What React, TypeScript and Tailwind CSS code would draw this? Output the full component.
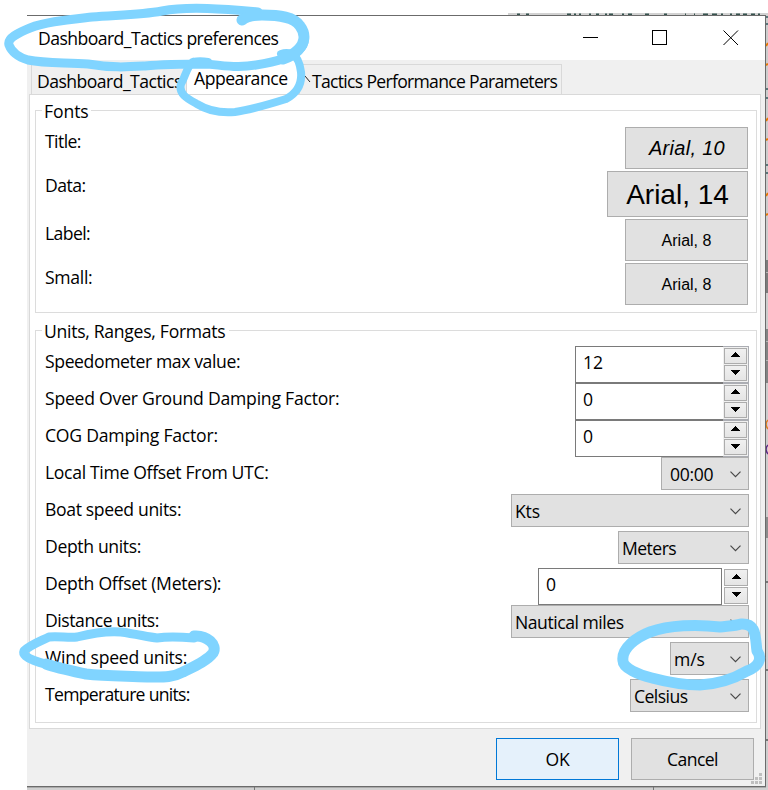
import React from "react";

const UI = "font-['Open_Sans','Noto_Sans',sans-serif] text-[17.6px] text-black whitespace-nowrap";

function Chevron() {
  return (
    <svg width="11" height="7" viewBox="0 0 11 7" className="mt-px shrink-0">
      <path d="M0.5 0.7L5.5 5.7L10.5 0.7" fill="none" stroke="#484848" strokeWidth="1.2" />
    </svg>
  );
}

function Combo({ text, box, textClass }: { text: string; box: string; textClass: string }) {
  return (
    <div className={`flex h-[33px] items-center justify-between border border-[#adadad] bg-[#e1e1e1] pr-[7px] ${box}`}>
      <span className={`leading-[24px] ${textClass}`}>{text}</span>
      <Chevron />
    </div>
  );
}

function Arrow({ down }: { down?: boolean }) {
  return (
    <svg width="9" height="5" viewBox="0 0 9 5" shapeRendering="crispEdges">
      <path d={down ? "M0 0H9V1H8V2H7V3H6V4H5V5H4V4H3V3H2V2H1V1H0Z" : "M0 5H9V4H8V3H7V2H6V1H5V0H4V1H3V2H2V3H1V4H0Z"} />
    </svg>
  );
}

function SpinButtons({ size }: { size: string }) {
  return (
    <>
      <div className={`flex items-center justify-center border border-[#acacac] bg-linear-to-b from-[#f0f0f0] to-[#e5e5e5] pb-[3px] ${size}`}>
        <Arrow />
      </div>
      <div className={`flex items-center justify-center border border-[#acacac] bg-linear-to-b from-[#f0f0f0] to-[#e5e5e5] pb-[2px] ${size}`}>
        <Arrow down />
      </div>
    </>
  );
}

function Spin({ text }: { text: string }) {
  return (
    <div className="flex h-[37px] w-[174px]">
      <div className="flex w-[148px] border border-r-0 border-[#7a7a7a] bg-white pl-[7px] pt-[3px]">
        <span className="leading-[24px]">{text}</span>
      </div>
      <div className="flex flex-1 flex-col gap-px border border-l-0 border-[#abadb3] bg-[#f0f0f0] py-px pl-px pr-px">
        <SpinButtons size="h-[17px] w-full" />
      </div>
    </div>
  );
}

function FontButton({ text, box }: { text: string; box: string }) {
  return (
    <button className={`flex items-center justify-center border border-[#adadad] bg-[#e1e1e1] font-['Liberation_Sans',Arial,sans-serif] ${box}`}>
      {text}
    </button>
  );
}

const fontRows = [
  { label: "Title:", track: "tracking-[-0.57px]", height: "h-[44px]", text: "Arial, 10", box: "w-[123px] h-[42px] text-[20px] tracking-[0.3px] italic pl-[1px]" },
  { label: "Data:", track: "tracking-[-0.5px]", height: "h-[48px]", text: "Arial, 14", box: "w-[141px] h-[46px] text-[28px] pt-[2px]" },
  { label: "Label:", track: "tracking-[-0.6px]", height: "h-[44px]", text: "Arial, 8", box: "w-[123px] h-[42px] text-[16px] pt-[2px]" },
  { label: "Small:", track: "tracking-[-0.3px]", height: "h-[44px]", text: "Arial, 8", box: "w-[123px] h-[42px] text-[16px] pt-[2px]" },
];

const unitRows = [
  { label: "Speedometer max value:", track: "tracking-[-0.39px]", control: <Spin text="12" /> },
  { label: "Speed Over Ground Damping Factor:", track: "tracking-[-0.23px]", control: <Spin text="0" /> },
  { label: "COG Damping Factor:", track: "tracking-[-0.22px]", control: <Spin text="0" /> },
  { label: "Local Time Offset From UTC:", track: "tracking-[-0.33px]", control: <Combo text="00:00" box="w-[88px] pl-[8px]" textClass="tracking-[-0.3px]" /> },
  { label: "Boat speed units:", track: "tracking-[-0.35px]", control: <Combo text="Kts" box="w-[238px] pl-[3px]" textClass="tracking-[-0.2px]" /> },
  { label: "Depth units:", track: "tracking-[-0.36px]", control: <Combo text="Meters" box="w-[131px] pl-[3px]" textClass="tracking-[-0.55px]" /> },
  {
    label: "Depth Offset (Meters):",
    track: "tracking-[-0.27px]",
    control: (
      <div className="flex h-[37px] w-[211px] gap-[2px]">
        <div className="w-[184px] border border-[#7a7a7a] pl-[7px] pt-[3px] leading-[24px]">0</div>
        <div className="flex flex-col gap-px pt-px">
          <SpinButtons size="h-[17px] w-[24px]" />
        </div>
      </div>
    ),
  },
  { label: "Distance units:", track: "tracking-[-0.45px]", control: <Combo text="Nautical miles" box="w-[238px] pl-[3px]" textClass="tracking-[-0.47px]" /> },
  { label: "Wind speed units:", track: "tracking-[-0.25px]", control: <Combo text="m/s" box="w-[79px] pl-[3px]" textClass="tracking-[-0.1px]" /> },
  { label: "Temperature units:", track: "tracking-[-0.71px]", control: <Combo text="Celsius" box="w-[119px] pl-[3px]" textClass="tracking-[-0.55px]" /> },
];

function Backdrop() {
  return (
    <svg className="absolute left-0 top-0" width="768" height="790" viewBox="0 0 768 790">
      <rect x="508" y="13" width="260" height="3" fill="#d2d2d2" />
      <path d="M517 14.5h3m6 0h3M567 14.5h4m3 0h2m3 0h2m8 0h2m5 0h3m6 0h2m2 0h4m9 0h2m4 0h4m13 0h4m15 0h3m18 0h1m8 0h1m8 0h5m4 0h5m4 0h2m7 0h2m4 0h4m3 0h4m4 0h4m3 0h2" stroke="#35534e" strokeWidth="2" />
      <rect x="766" y="16" width="2" height="774" fill="#cdcdcd" />
      <rect x="766" y="260" width="2" height="33" fill="#7c7c7c" />
      <rect x="766" y="272" width="2" height="1" fill="#b5b5b5" />
      <rect x="766" y="329" width="2" height="54" fill="#838383" />
      <path d="M766 341.5h2M766 360.5h2" stroke="#b5b5b5" />
      <rect x="766" y="517" width="2" height="21" fill="#8c8c8c" />
      <path d="M766 46l2-3M766 65l2-1M766 121l2-3M766 140l2-1M766 196l2-3M766 215l2-1" stroke="#e87800" strokeWidth="2" />
      <path d="M766 17h2M766 24h2M766 89h2M766 98h2M766 165h2M766 173h2" stroke="#355b60" strokeWidth="1.5" />
      <path d="M768 420q-4 4 0 9" stroke="#e07b20" fill="none" strokeWidth="1.5" />
      <path d="M768 445q-4 4 0 9" stroke="#5c2785" fill="none" strokeWidth="1.5" />
      <path d="M766 670h2M766 582h2M766 740h2" stroke="#777" strokeWidth="2" />
      <rect x="27" y="787" width="741" height="3" fill="#d0d0d0" />
      <path d="M27 787.5H766" stroke="#aaa" />
      <path d="M254.5 787v3M653.5 787v3" stroke="#777" />
    </svg>
  );
}

function Marker() {
  return (
    <svg className="pointer-events-none absolute left-0 top-0" width="768" height="790" viewBox="0 0 768 790" fill="none" stroke="#80d4ff" strokeLinecap="round" strokeLinejoin="round">
      <path strokeWidth="9" d="M258 12C225 9 188 6 162 11C140 15 115 15 92 17C66 20 45 22 30 28C18 33 7 38 9 45C12 53 18 57 28 60C47 64 68 62 88 64C112 68 127 67 145 66C166 64 185 64 207 64C225 66 240 68 256 65C275 62 291 58 299 50C307 43 305 33 300 26" />
      <path strokeWidth="11" d="M242 20C246 17 253 15 262 15C280 15 294 17 300 26C306 34 305 43 298 50C294 54 289 57 283 59" />
      <path strokeWidth="8" d="M193 62C187 66 186 75 181 84C178 94 188 99 197 104C210 112 224 113 235 112C250 110 270 104 286 99C299 92 302 82 301 72C300 64 298 57 292 54C289 53 284 53 281 54M193 62C198 61 202 61 208 62" />
      <path strokeWidth="11" d="M194 636C207 635 218 645 213 653C207 661 193 667 183 672C172 678 162 677 147 677C126 676 105 676 86 674C72 671 57 668 46 664" />
      <path strokeWidth="9" d="M60 667C42 664 21 658 24 651C30 645 41 641 49 637C58 636 69 638 77 637C93 633 108 631 121 632C136 634 148 637 157 638C170 636 182 637 194 638" />
      <path strokeWidth="11" d="M741 624C735 626 728 626 720 627C697 624 669 625 650 632C637 637 621 648 623 661C623 668 639 675 652 678C667 682 682 685 700 685C718 684 735 678 747 671C758 667 763 659 757 651C755 637 757 623 741 624" />
    </svg>
  );
}

export default function App() {
  return (
    <div className={`relative h-[790px] w-[768px] overflow-hidden bg-white pl-[27px] pt-[15px] ${UI}`}>
      <Backdrop />
      <div className="relative flex h-[772px] w-[739px] flex-col border-b border-r border-t border-[#6b6b6b] bg-[#f0f0f0]">
        <div className="flex h-[44px] items-center justify-between bg-white pl-[11px] pr-[26px]">
          <span className="pt-px tracking-[-0.56px]">Dashboard_Tactics preferences</span>
          <svg width="156" height="15" viewBox="0 0 156 15" fill="none" stroke="#000" className="mt-[-1px]">
            <path d="M0 7.5H15" />
            <rect x="69.5" y="0.5" width="14" height="14" />
            <path d="M140.5 0.5L155 15M155 0.5L140.5 15" />
          </svg>
        </div>
        <div className="flex h-[34px] items-end pl-[4px]">
          <div className="flex h-[30px] w-[155px] items-center border-l border-t border-[#d9d9d9] pl-[5px]">
            <span className="pt-[3px] tracking-[-0.54px]">Dashboard_Tactics</span>
          </div>
          <div className="flex h-[34px] w-[114px] items-center border-l border-r border-[#d9d9d9] bg-white pl-[7px]">
            <span className="pt-[3px] tracking-[-0.48px]">Appearance</span>
          </div>
          <div className="flex h-[30px] w-[262px] items-center border-r border-t border-[#d9d9d9] pl-[4px]">
            <svg width="8" height="10" viewBox="0 0 8 10" className="shrink-0"><path d="M1 1L6 7" stroke="#222" /></svg>
            <span className="pt-[3px] tracking-[-0.7px]">Tactics Performance Parameters</span>
          </div>
        </div>
        <div className="ml-[2px] flex h-[635px] w-[732px] flex-col border border-[#d9d9d9] bg-white px-[5px] pt-[15px]">
          <section className="h-[203px] w-[722px] border border-[#dcdcdc] pl-[9px] pr-[8px]">
            <div className="-ml-[3px] -mt-[12px] h-[24px] w-[49px] bg-white pl-[2px] leading-[24px] tracking-[-0.1px]">Fonts</div>
            <div className="pt-[4px]">
              {fontRows.map((r) => (
                <div key={r.label} className={`flex items-start justify-between ${r.height}`}>
                  <span className={`pt-[2px] leading-[24px] ${r.track}`}>{r.label}</span>
                  <FontButton text={r.text} box={r.box} />
                </div>
              ))}
            </div>
          </section>
          <section className="mt-[17px] h-[393px] w-[722px] border border-[#dcdcdc] pl-[9px] pr-[7px]">
            <div className="-ml-[3px] -mt-[12px] h-[24px] w-[187px] bg-white pl-[2px] leading-[24px] tracking-[-0.29px]">Units, Ranges, Formats</div>
            <div className="pt-[3px]">
              {unitRows.map((r) => (
                <div key={r.label} className="flex h-[37px] items-start justify-between">
                  <span className={`pt-[3px] leading-[24px] ${r.track}`}>{r.label}</span>
                  {r.control}
                </div>
              ))}
            </div>
          </section>
        </div>
        <div className="flex justify-end gap-[12px] pr-[11px] pt-[9px]">
          <button className="h-[42px] w-[123px] border border-[#0078d7] bg-[#e5f1fb] tracking-[-0.2px]">OK</button>
          <button className="h-[42px] w-[123px] border border-[#adadad] bg-[#e1e1e1] tracking-[-0.6px]">Cancel</button>
        </div>
        <svg className="absolute bottom-[2px] right-[3px]" width="11" height="11" viewBox="0 0 11 11" fill="#bfbfbf">
          <path d="M8 0h3v3h-3zM4 4h3v3h-3zM8 4h3v3h-3zM0 8h3v3h-3zM4 8h3v3h-3zM8 8h3v3h-3z" />
        </svg>
      </div>
      <Marker />
    </div>
  );
}
